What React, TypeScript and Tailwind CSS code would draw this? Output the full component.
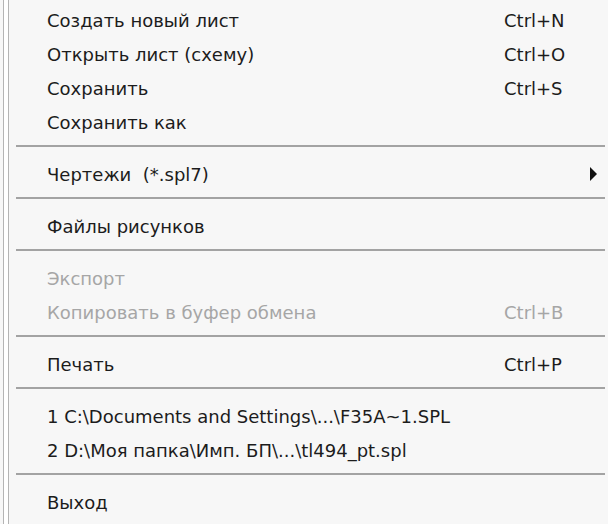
const items: (
  | { kind: "sep" }
  | { kind: "item"; label: string; shortcut?: string; disabled?: boolean; submenu?: boolean }
)[] = [
  { kind: "item", label: "Создать новый лист", shortcut: "Ctrl+N" },
  { kind: "item", label: "Открыть лист (схему)", shortcut: "Ctrl+O" },
  { kind: "item", label: "Сохранить", shortcut: "Ctrl+S" },
  { kind: "item", label: "Сохранить как" },
  { kind: "sep" },
  { kind: "item", label: "Чертежи  (*.spl7)", submenu: true },
  { kind: "sep" },
  { kind: "item", label: "Файлы рисунков" },
  { kind: "sep" },
  { kind: "item", label: "Экспорт", disabled: true },
  { kind: "item", label: "Копировать в буфер обмена", shortcut: "Ctrl+B", disabled: true },
  { kind: "sep" },
  { kind: "item", label: "Печать", shortcut: "Ctrl+P" },
  { kind: "sep" },
  { kind: "item", label: "1 C:\\Documents and Settings\\...\\F35A~1.SPL" },
  { kind: "item", label: "2 D:\\Моя папка\\Имп. БП\\...\\tl494_pt.spl" },
  { kind: "sep" },
  { kind: "item", label: "Выход" },
];

export default function App() {
  return (
    <div className="w-[608px] h-[524px] bg-[#f7f7f7] flex overflow-hidden font-['DejaVu_Sans',sans-serif]">
      {/* left frame */}
      <div className="w-[12px] flex shrink-0">
        <div className="w-[3px]" />
        <div className="w-[1px] bg-[#b4b4b4]" />
        <div className="w-[4px] bg-white" />
        <div className="w-[1px] bg-[#b4b4b4]" />
      </div>
      <div className="flex-1 flex flex-col pt-[3px] pl-[4px] pr-[3px]">
        {items.map((it, i) =>
          it.kind === "sep" ? (
            <div key={i} className="h-[18px] pt-[6px]">
              <div className="h-[2px] bg-[#a3a3a3]" />
            </div>
          ) : (
            <div
              key={i}
              className={`h-[34px] flex items-center text-[18px] ${
                it.disabled ? "text-[#a6a6a6]" : "text-[#1c1c1c]"
              }`}
            >
              <span className="pl-[31px] flex-1 whitespace-pre">{it.label}</span>
              {it.shortcut && <span className="w-[101px]">{it.shortcut}</span>}
              {it.submenu && (
                <svg width="8" height="14" viewBox="0 0 8 14" className="mr-[7px]">
                  <path d="M0 0 L7 7 L0 14 Z" fill="#111" />
                </svg>
              )}
            </div>
          )
        )}
      </div>
    </div>
  );
}
